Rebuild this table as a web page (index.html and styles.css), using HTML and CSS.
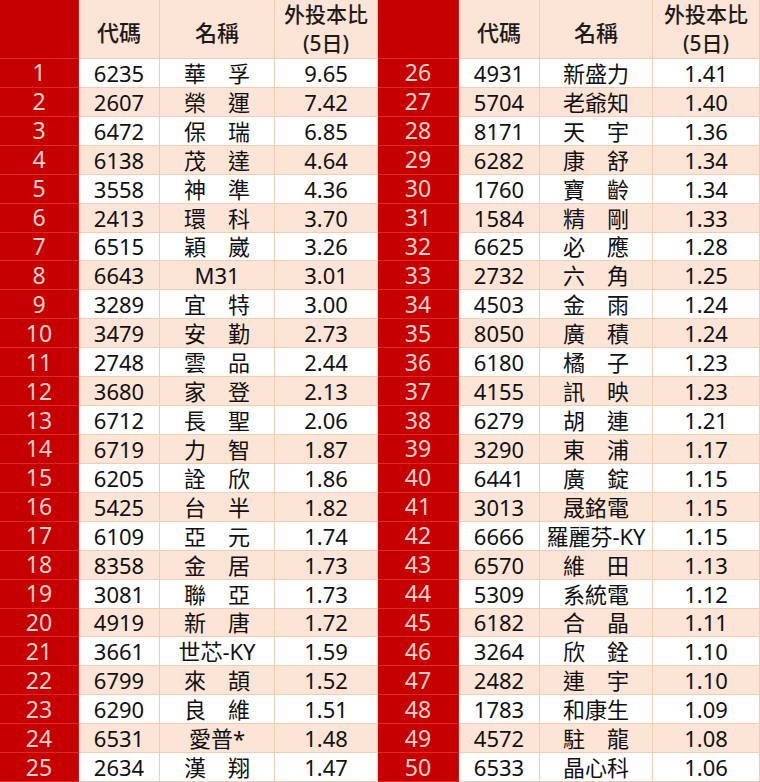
FILE: index.html
```html
<!DOCTYPE html>
<html lang="zh-Hant">
<head>
<meta charset="utf-8">
<title>外投本比排行</title>
<link rel="stylesheet" href="styles.css">
</head>
<body>
<div class="table">
  <div class="row head">
    <div class="c rank"></div><div class="c">代碼</div><div class="c">名稱</div><div class="c two">外投本比<br>(5日)</div>
    <div class="c rank"></div><div class="c">代碼</div><div class="c">名稱</div><div class="c two">外投本比<br>(5日)</div>
  </div>
  <div class="row"><div class="c rank">1</div><div class="c">6235</div><div class="c">華　孚</div><div class="c">9.65</div><div class="c rank">26</div><div class="c">4931</div><div class="c">新盛力</div><div class="c">1.41</div></div>
  <div class="row alt"><div class="c rank">2</div><div class="c">2607</div><div class="c">榮　運</div><div class="c">7.42</div><div class="c rank">27</div><div class="c">5704</div><div class="c">老爺知</div><div class="c">1.40</div></div>
  <div class="row"><div class="c rank">3</div><div class="c">6472</div><div class="c">保　瑞</div><div class="c">6.85</div><div class="c rank">28</div><div class="c">8171</div><div class="c">天　宇</div><div class="c">1.36</div></div>
  <div class="row alt"><div class="c rank">4</div><div class="c">6138</div><div class="c">茂　達</div><div class="c">4.64</div><div class="c rank">29</div><div class="c">6282</div><div class="c">康　舒</div><div class="c">1.34</div></div>
  <div class="row"><div class="c rank">5</div><div class="c">3558</div><div class="c">神　準</div><div class="c">4.36</div><div class="c rank">30</div><div class="c">1760</div><div class="c">寶　齡</div><div class="c">1.34</div></div>
  <div class="row alt"><div class="c rank">6</div><div class="c">2413</div><div class="c">環　科</div><div class="c">3.70</div><div class="c rank">31</div><div class="c">1584</div><div class="c">精　剛</div><div class="c">1.33</div></div>
  <div class="row"><div class="c rank">7</div><div class="c">6515</div><div class="c">穎　崴</div><div class="c">3.26</div><div class="c rank">32</div><div class="c">6625</div><div class="c">必　應</div><div class="c">1.28</div></div>
  <div class="row alt"><div class="c rank">8</div><div class="c">6643</div><div class="c">M31</div><div class="c">3.01</div><div class="c rank">33</div><div class="c">2732</div><div class="c">六　角</div><div class="c">1.25</div></div>
  <div class="row"><div class="c rank">9</div><div class="c">3289</div><div class="c">宜　特</div><div class="c">3.00</div><div class="c rank">34</div><div class="c">4503</div><div class="c">金　雨</div><div class="c">1.24</div></div>
  <div class="row alt"><div class="c rank">10</div><div class="c">3479</div><div class="c">安　勤</div><div class="c">2.73</div><div class="c rank">35</div><div class="c">8050</div><div class="c">廣　積</div><div class="c">1.24</div></div>
  <div class="row"><div class="c rank">11</div><div class="c">2748</div><div class="c">雲　品</div><div class="c">2.44</div><div class="c rank">36</div><div class="c">6180</div><div class="c">橘　子</div><div class="c">1.23</div></div>
  <div class="row alt"><div class="c rank">12</div><div class="c">3680</div><div class="c">家　登</div><div class="c">2.13</div><div class="c rank">37</div><div class="c">4155</div><div class="c">訊　映</div><div class="c">1.23</div></div>
  <div class="row"><div class="c rank">13</div><div class="c">6712</div><div class="c">長　聖</div><div class="c">2.06</div><div class="c rank">38</div><div class="c">6279</div><div class="c">胡　連</div><div class="c">1.21</div></div>
  <div class="row alt"><div class="c rank">14</div><div class="c">6719</div><div class="c">力　智</div><div class="c">1.87</div><div class="c rank">39</div><div class="c">3290</div><div class="c">東　浦</div><div class="c">1.17</div></div>
  <div class="row"><div class="c rank">15</div><div class="c">6205</div><div class="c">詮　欣</div><div class="c">1.86</div><div class="c rank">40</div><div class="c">6441</div><div class="c">廣　錠</div><div class="c">1.15</div></div>
  <div class="row alt"><div class="c rank">16</div><div class="c">5425</div><div class="c">台　半</div><div class="c">1.82</div><div class="c rank">41</div><div class="c">3013</div><div class="c">晟銘電</div><div class="c">1.15</div></div>
  <div class="row"><div class="c rank">17</div><div class="c">6109</div><div class="c">亞　元</div><div class="c">1.74</div><div class="c rank">42</div><div class="c">6666</div><div class="c">羅麗芬-KY</div><div class="c">1.15</div></div>
  <div class="row alt"><div class="c rank">18</div><div class="c">8358</div><div class="c">金　居</div><div class="c">1.73</div><div class="c rank">43</div><div class="c">6570</div><div class="c">維　田</div><div class="c">1.13</div></div>
  <div class="row"><div class="c rank">19</div><div class="c">3081</div><div class="c">聯　亞</div><div class="c">1.73</div><div class="c rank">44</div><div class="c">5309</div><div class="c">系統電</div><div class="c">1.12</div></div>
  <div class="row alt"><div class="c rank">20</div><div class="c">4919</div><div class="c">新　唐</div><div class="c">1.72</div><div class="c rank">45</div><div class="c">6182</div><div class="c">合　晶</div><div class="c">1.11</div></div>
  <div class="row"><div class="c rank">21</div><div class="c">3661</div><div class="c">世芯-KY</div><div class="c">1.59</div><div class="c rank">46</div><div class="c">3264</div><div class="c">欣　銓</div><div class="c">1.10</div></div>
  <div class="row alt"><div class="c rank">22</div><div class="c">6799</div><div class="c">來　頡</div><div class="c">1.52</div><div class="c rank">47</div><div class="c">2482</div><div class="c">連　宇</div><div class="c">1.10</div></div>
  <div class="row"><div class="c rank">23</div><div class="c">6290</div><div class="c">良　維</div><div class="c">1.51</div><div class="c rank">48</div><div class="c">1783</div><div class="c">和康生</div><div class="c">1.09</div></div>
  <div class="row alt"><div class="c rank">24</div><div class="c">6531</div><div class="c">愛普*</div><div class="c">1.48</div><div class="c rank">49</div><div class="c">4572</div><div class="c">駐　龍</div><div class="c">1.08</div></div>
  <div class="row"><div class="c rank">25</div><div class="c">2634</div><div class="c">漢　翔</div><div class="c">1.47</div><div class="c rank">50</div><div class="c">6533</div><div class="c">晶心科</div><div class="c">1.06</div></div>
</div>
</body>
</html>
```
FILE: styles.css
```css
html, body {
  margin: 0;
  padding: 0;
  background: #ffffff;
}

.table {
  width: 760px;
  height: 782px;
  display: flex;
  flex-direction: column;
  font-family: "Noto Sans", "Noto Sans CJK TC", sans-serif;
  font-size: 22px;
  color: #111111;
}

.row {
  flex: 1 1 0;
  display: grid;
  grid-template-columns: 79px 81px 115px 103px 81px 81px 113px 107px;
  background: #ffffff;
}

.row.alt {
  background: #fce4d6;
}

.row.head {
  flex: 0 0 58px;
  background: #fce4d6;
  font-weight: 500;
  color: #1c1c1c;
}

.c {
  display: flex;
  align-items: center;
  justify-content: center;
  text-align: center;
  white-space: nowrap;
  border-right: 1px solid #f3cdb2;
  border-bottom: 1px solid #f3cdb2;
  line-height: 1;
  box-sizing: border-box;
}

.head .c {
  padding-top: 6px;
}

.head .two {
  line-height: 29px;
  padding-top: 0;
  font-size: 21px;
}

.c.rank {
  background: #c60000;
  color: #fbd3cc;
  font-size: 23px;
  border-right: 1px solid #d41818;
  border-bottom: 1px solid #de2a24;
}
```
